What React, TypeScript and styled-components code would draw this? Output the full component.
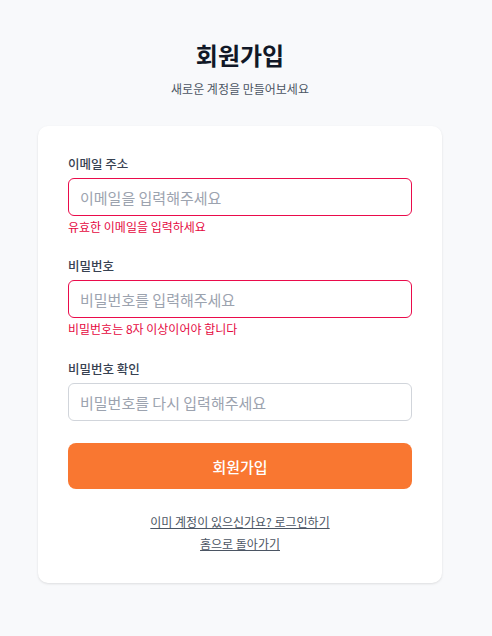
import React from "react";
import styled, { createGlobalStyle } from "styled-components";

const Global = createGlobalStyle`
  html, body { margin: 0; padding: 0; background: #f8f9fb; }
  body { font-family: "Noto Sans CJK KR", "Noto Sans", sans-serif; }
  * { box-sizing: border-box; }
`;

const Page = styled.div`
  min-height: 636px;
  background: #f8f9fb;
  padding: 38px 50px 40px 38px;
`;

const Header = styled.header`
  display: flex;
  flex-direction: column;
  align-items: center;
`;

const Title = styled.h1`
  margin: 0;
  font-size: 24px;
  line-height: 34px;
  font-weight: 700;
  color: #111827;
`;

const Subtitle = styled.p`
  margin: 7px 0 0;
  font-size: 12px;
  line-height: 20px;
  color: #4b5563;
`;

const Card = styled.form`
  margin-top: 27px;
  background: #ffffff;
  border-radius: 10px;
  box-shadow: 0 1px 3px rgba(0, 0, 0, 0.08), 0 1px 2px rgba(0, 0, 0, 0.04);
  padding: 28px 30px 29px;
  display: flex;
  flex-direction: column;
`;

const Field = styled.div<{ $gap: number }>`
  display: flex;
  flex-direction: column;
  margin-bottom: ${(p) => p.$gap}px;
`;

const Label = styled.label`
  font-size: 12.5px;
  line-height: 20px;
  font-weight: 500;
  color: #374151;
  margin-bottom: 4px;
`;

const Input = styled.input<{ $error?: boolean }>`
  height: 38px;
  width: 100%;
  border: 1px solid ${(p) => (p.$error ? "#ea0b4b" : "#d1d5db")};
  border-radius: 6px;
  padding: 0 11px;
  font-family: inherit;
  font-size: 15px;
  color: #111827;
  background: #fff;
  outline: none;
  &::placeholder { color: #9ca3af; }
`;

const ErrorText = styled.p`
  margin: 4px 0 0;
  font-size: 12px;
  line-height: 14px;
  color: #e5093f;
`;

const Submit = styled.button`
  height: 46px;
  border: none;
  border-radius: 8px;
  background: #f97731;
  color: #fff;
  font-family: inherit;
  font-size: 15px;
  font-weight: 500;
  cursor: pointer;
`;

const Links = styled.div`
  margin-top: 23px;
  display: flex;
  flex-direction: column;
  align-items: center;
  gap: 2px;
`;

const LinkText = styled.a`
  font-size: 12px;
  line-height: 20px;
  color: #4b5563;
  text-decoration: underline;
  cursor: pointer;
`;

export default function App() {
  return (
    <>
      <Global />
      <Page>
        <Header>
          <Title>회원가입</Title>
          <Subtitle>새로운 계정을 만들어보세요</Subtitle>
        </Header>
        <Card onSubmit={(e) => e.preventDefault()}>
          <Field $gap={22}>
            <Label>이메일 주소</Label>
            <Input $error placeholder="이메일을 입력해주세요" />
            <ErrorText>유효한 이메일을 입력하세요</ErrorText>
          </Field>
          <Field $gap={23}>
            <Label>비밀번호</Label>
            <Input $error type="password" placeholder="비밀번호를 입력해주세요" />
            <ErrorText>비밀번호는 8자 이상이어야 합니다</ErrorText>
          </Field>
          <Field $gap={22}>
            <Label>비밀번호 확인</Label>
            <Input type="password" placeholder="비밀번호를 다시 입력해주세요" />
          </Field>
          <Submit type="submit">회원가입</Submit>
          <Links>
            <LinkText>이미 계정이 있으신가요? 로그인하기</LinkText>
            <LinkText>홈으로 돌아가기</LinkText>
          </Links>
        </Card>
      </Page>
    </>
  );
}
